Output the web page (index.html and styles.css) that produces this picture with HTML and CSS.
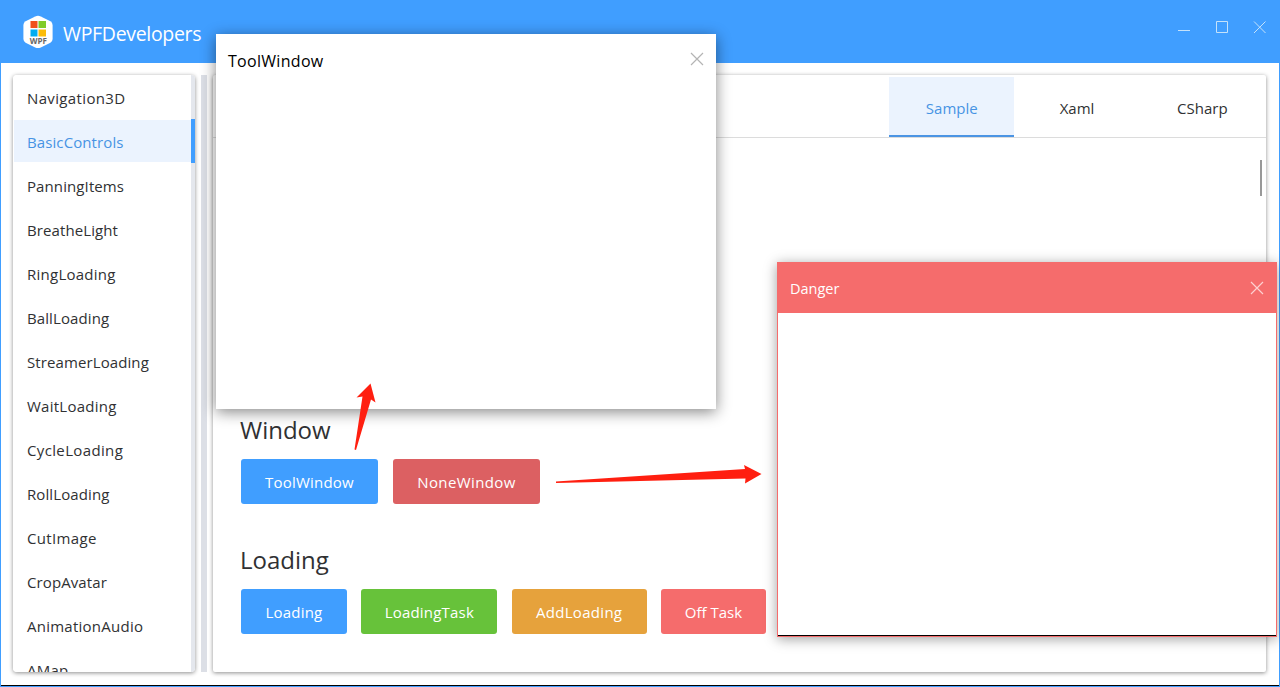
FILE: index.html
```
<!DOCTYPE html>
<html lang="en">
<head>
<meta charset="utf-8">
<title>WPFDevelopers</title>
<link rel="stylesheet" href="styles.css">
</head>
<body>
<div class="app">
  <header class="titlebar">
    <svg class="logo" width="32" height="34" viewBox="0 0 32 34">
      <path d="M13.2 1.400Q16 0 18.800 1.400L28.400 6.300Q30.500 7.500 30.600 10V24Q30.500 26.500 28.400 27.700L18.800 32.400Q16 33.600 13.200 32.400L3.600 27.700Q1.500 26.500 1.400 24V10Q1.500 7.500 3.600 6.300Z" fill="#fff"/>
      <path d="M8.500 6h7v7h-7z" fill="#f1511b"/><path d="M16.500 6h7.500v7h-7.500z" fill="#80cc28"/>
      <path d="M8.500 14.500h7v7h-7z" fill="#00adef"/><path d="M16.500 14.500h7.500v7h-7.500z" fill="#fbbc09"/>
      <text class="logo-text" x="16.400" y="28.800" text-anchor="middle">WPF</text>
    </svg>
    <h1 class="app-name">WPFDevelopers</h1>
    <svg class="controls" width="90" height="16" viewBox="0 0 90 16" fill="none" stroke="#c5e2fa">
      <path d="M1 11.500H13M39.500 2.500h11v11h-11zM77 2.500l11.500 11.500M88.500 2.500L77 14"/>
    </svg>
  </header>
  <main class="body">
    <nav class="sidebar">
      <ul class="nav-list">
        <li class="nav-item wide">Navigation3D</li>
        <li class="nav-item narrow active">BasicControls</li>
        <li class="nav-item narrow">PanningItems</li>
        <li class="nav-item narrow">BreatheLight</li>
        <li class="nav-item">RingLoading</li>
        <li class="nav-item narrow">BallLoading</li>
        <li class="nav-item narrow">StreamerLoading</li>
        <li class="nav-item">WaitLoading</li>
        <li class="nav-item wide">CycleLoading</li>
        <li class="nav-item narrow">RollLoading</li>
        <li class="nav-item wide">CutImage</li>
        <li class="nav-item narrow">CropAvatar</li>
        <li class="nav-item">AnimationAudio</li>
        <li class="nav-item">AMap</li>
      </ul>
    </nav>
    <div class="splitter"></div>
    <section class="panel">
      <div class="tabs">
        <div class="tab selected">Sample</div>
        <div class="tab">Xaml</div>
        <div class="tab">CSharp</div>
      </div>
      <div class="content">
        <div class="samples">
          <h2 class="heading">Window</h2>
          <div class="buttons">
            <button class="btn primary w-tool">ToolWindow</button>
            <button class="btn pressed w-none">NoneWindow</button>
          </div>
          <h2 class="heading">Loading</h2>
          <div class="buttons loading">
            <button class="btn primary w-load">Loading</button>
            <button class="btn success w-task">LoadingTask</button>
            <button class="btn warning w-add">AddLoading</button>
            <button class="btn danger w-off">Off Task</button>
          </div>
        </div>
        <div class="scroll-thumb"></div>
      </div>
    </section>
  </main>
</div>
<div class="window tool-window">
  <div class="window-bar"><span class="window-title">ToolWindow</span>
    <svg class="close" width="14" height="14" viewBox="0 0 14 14"><path d="M1 1l12 12M13 1L1 13" fill="none" stroke="#b4b4b4" stroke-width="1.200"/></svg>
  </div>
</div>
<div class="window danger-window">
  <div class="window-bar"><span class="window-title">Danger</span>
    <svg class="close" width="14" height="14" viewBox="0 0 14 14"><path d="M1 1l12 12M13 1L1 13" fill="none" stroke="#fdd0d0" stroke-width="1.200"/></svg>
  </div>
</div>
<svg class="arrows" width="1280" height="687" viewBox="0 0 1280 687" fill="#ff1f10">
  <path d="M354.500 449.500L362.500 396.500L356.500 397.500L370.500 383.500L375.500 402.500L371 399.500L356 450Z"/>
  <path d="M556 481.500L745 469L744 465L761.500 474L745 483.500L745.500 478.500L556 483Z"/>
</svg>
</body>
</html>
```
FILE: styles.css
```
* { box-sizing: border-box; }
body {
  margin: 0;
  width: 1280px;
  height: 687px;
  overflow: hidden;
  font-family: "Open Sans", "Noto Sans", sans-serif;
  font-size: 15px;
  color: #303133;
}
.app {
  display: flex;
  flex-direction: column;
  height: 687px;
  border: 1px solid #409eff;
  border-top: 0;
  background: #fff;
}
.titlebar {
  display: flex;
  align-items: flex-start;
  height: 63px;
  flex: none;
  padding: 15px 12px 0 21px;
  background: #409eff;
}
.logo-text { font: 700 8px "Open Sans", sans-serif; fill: #666; }
.app-name {
  margin: 5px 0 0 9px;
  font-size: 19.500px;
  letter-spacing: -.32px;
  line-height: 28px;
  font-weight: 400;
  color: #fff;
}
.controls { margin: 4px 0 0 auto; }
.body {
  display: flex;
  flex: 1;
  min-height: 0;
  padding: 12px 13px 13px 12px;
  border-bottom: 1px solid #000;
}
.sidebar {
  width: 182px;
  overflow: hidden;
  border-radius: 4px;
  background: linear-gradient(90deg, #fff 178px, #e4e7ed 178px);
  box-shadow: 0 1px 4px rgba(0, 0, 0, .45);
}
.nav-list { margin: 0; padding: 1px 0 0; list-style: none; }
.nav-item {
  height: 44px;
  padding-left: 14px;
  line-height: 44px;
  letter-spacing: .25px;
}
.nav-item.narrow { letter-spacing: .1px; }
.nav-item.wide { letter-spacing: .36px; }
.nav-item.active {
  margin-top: -1px;
  height: 45px;
  line-height: 46px;
  color: #4793e4;
  background: linear-gradient(#ebf3fe, #ebf3fe) 1px 1px / 177px 42px no-repeat, linear-gradient(#409eff, #409eff) 178px 0 / 4px 44px no-repeat;
}
.splitter { width: 6px; margin: 0 6px; background: #dcdfe6; }
.panel {
  display: flex;
  flex-direction: column;
  flex: 1;
  border-radius: 2px;
  background: #fff;
  box-shadow: 0 1px 4px rgba(0, 0, 0, .45);
}
.tabs {
  display: flex;
  justify-content: flex-end;
  height: 63px;
  padding: 2px 1px 0 0;
  border-bottom: 1px solid #dcdcdc;
}
.tab { width: 125.300px; line-height: 63px; text-align: center; }
.tab.selected { color: #4793e4; background: #ebf3fe; border-bottom: 2px solid #4b94e3; }
.content { display: flex; flex: 1; justify-content: space-between; padding: 22px 4px 0 27px; }
.samples { padding-top: 252px; }
.scroll-thumb { width: 2px; height: 36px; background: #999; }
.heading { margin: 0; height: 47px; font-size: 24px; line-height: 36px; font-weight: 400; }
.buttons { display: flex; gap: 15px; height: 83px; padding-left: 1px; }
.buttons.loading { gap: 14.330px; }
.btn {
  height: 45px;
  padding: 0;
  border: 0;
  border-radius: 3px;
  font: inherit;
  letter-spacing: .2px;
  color: #fff;
}
.w-tool { width: 137px; }
.w-none { width: 147px; letter-spacing: .4px; }
.w-load { width: 106px; }
.w-task { width: 136px; }
.w-add { width: 135px; letter-spacing: .3px; }
.w-off { width: 105px; letter-spacing: 0; }
.primary { background: #409eff; }
.pressed { background: #dc6062; }
.success { background: #67c23a; }
.warning { background: #e6a23c; }
.danger { background: #f56c6c; }
.window { position: absolute; background: #fff; }
.window-bar { display: flex; justify-content: space-between; }
.tool-window {
  left: 216px;
  top: 34px;
  width: 500px;
  height: 375px;
  box-shadow: 0 3px 14px rgba(0, 0, 0, .48);
  color: #000;
}
.tool-window .window-bar { padding: 18px 12px 0; }
.window-title { font-size: 16px; line-height: 18px; letter-spacing: .3px; }
.danger-window {
  left: 777px;
  top: 262px;
  width: 500px;
  height: 375px;
  border: 1px solid #f56c6c;
  box-shadow: 0 2px 12px rgba(0, 0, 0, .38), inset 0 -1px #000;
}
.danger-window .window-bar { height: 50px; padding: 18px 12px 0; background: #f56c6c; color: #fff; }
.danger-window .window-title { font-size: 14.500px; line-height: 16px; letter-spacing: 0; }
.arrows { position: absolute; left: 0; top: 0; pointer-events: none; }
```
